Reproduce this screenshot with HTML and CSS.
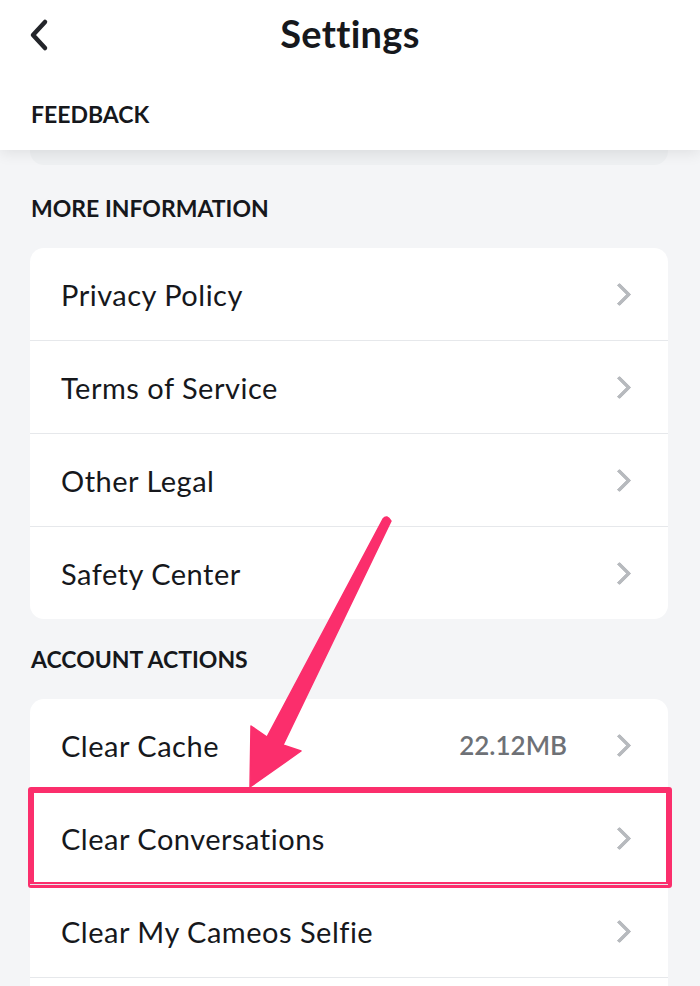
FILE: index.html
```html
<!DOCTYPE html>
<html lang="en">
<head>
    <meta charset="UTF-8">
    <meta name="viewport" content="width=device-width, initial-scale=1.0">
    <title>Settings</title>
    <link rel="stylesheet" href="styles.css">
</head>
<body>
    <div class="screen">
        <div class="header">
            <div class="title-bar">
                <svg class="back" width="24" height="36" viewBox="0 0 24 36">
                    <path d="M18 5 L6 18 L18 31" fill="none" stroke="#23252a" stroke-width="4.5" stroke-linecap="round" stroke-linejoin="round"/>
                </svg>
                <div class="title">Settings</div>
            </div>
            <div class="section-label">FEEDBACK</div>
        </div>

        <div class="content">
            <div class="card-stub"></div>

            <div class="section-label">MORE INFORMATION</div>
            <div class="card">
                <div class="row"><span class="label">Privacy Policy</span><span class="chev"></span></div>
                <div class="row"><span class="label">Terms of Service</span><span class="chev"></span></div>
                <div class="row"><span class="label">Other Legal</span><span class="chev"></span></div>
                <div class="row"><span class="label">Safety Center</span><span class="chev"></span></div>
            </div>

            <div class="section-label">ACCOUNT ACTIONS</div>
            <div class="card">
                <div class="row"><span class="label">Clear Cache</span><span class="value">22.12MB</span><span class="chev"></span></div>
                <div class="row highlighted"><span class="label">Clear Conversations</span><span class="chev"></span></div>
                <div class="row"><span class="label">Clear My Cameos Selfie</span><span class="chev"></span></div>
                <div class="row"></div>
            </div>
        </div>

        <!-- annotation arrow -->
        <svg class="arrow" width="700" height="986" viewBox="0 0 700 986">
            <path d="M383 519 Q387 514 391 521 L283 745 L301 751 L250 787 L251 726 L267 737 Z" fill="#fb2e6c" stroke="#fb2e6c" stroke-width="1.5" stroke-linejoin="round"/>
        </svg>
    </div>
</body>
</html>
```

FILE: styles.css
```css
body {
    margin: 0;
    font-family: Lato, "Noto Sans", sans-serif;
    color: #16181c;
    background: #f4f5f7;
}

.screen {
    position: relative;
    width: 700px;
    height: 986px;
    overflow: hidden;
    background: #f4f5f7;
}

.header {
    position: relative;
    z-index: 2;
    height: 150px;
    background: #ffffff;
    box-shadow: 0 3px 14px rgba(0, 0, 0, 0.09);
}

.title-bar {
    position: relative;
    height: 70px;
    display: flex;
    align-items: center;
    justify-content: center;
}

.back {
    position: absolute;
    left: 27px;
    top: 17px;
}

.title {
    font-size: 38px;
    font-weight: 700;
    letter-spacing: 0.3px;
    margin-top: -4px;
}

.section-label {
    font-size: 23px;
    font-weight: 700;
    padding-left: 31px;
    letter-spacing: 0;
    line-height: 28px;
}

.header .section-label {
    padding-top: 30px;
}

.content {
    padding: 0 32px 0 30px;
}

.card-stub {
    height: 15px;
    background: #eef0f2;
    border-radius: 0 0 14px 14px;
    margin-bottom: 29px;
}

.content .section-label {
    padding-left: 1px;
    margin-bottom: 26px;
}

.card {
    background: #ffffff;
    border-radius: 14px;
    margin-bottom: 26px;
}

.row {
    position: relative;
    height: 92px;
    display: flex;
    align-items: center;
    padding: 0 37px 0 31px;
    border-top: 1px solid #e6e8eb;
}

.row:first-child {
    border-top: none;
}

.label {
    flex: 1;
    font-size: 29px;
    letter-spacing: 0.5px;
}

.value {
    font-size: 26px;
    font-weight: 600;
    color: #6e7176;
    margin-right: 44px;
}

.chev {
    width: 13px;
    height: 13px;
    border-top: 4px solid #b7babe;
    border-right: 4px solid #b7babe;
    border-radius: 2px;
    transform: rotate(45deg);
    margin-right: 3px;
}

.highlighted::after {
    content: "";
    position: absolute;
    top: -5px;
    left: -2px;
    right: -4px;
    bottom: -4px;
    border: 6px solid #fb2e6c;
    border-radius: 3px;
}

.arrow {
    position: absolute;
    left: 0;
    top: 0;
    z-index: 3;
}
```
